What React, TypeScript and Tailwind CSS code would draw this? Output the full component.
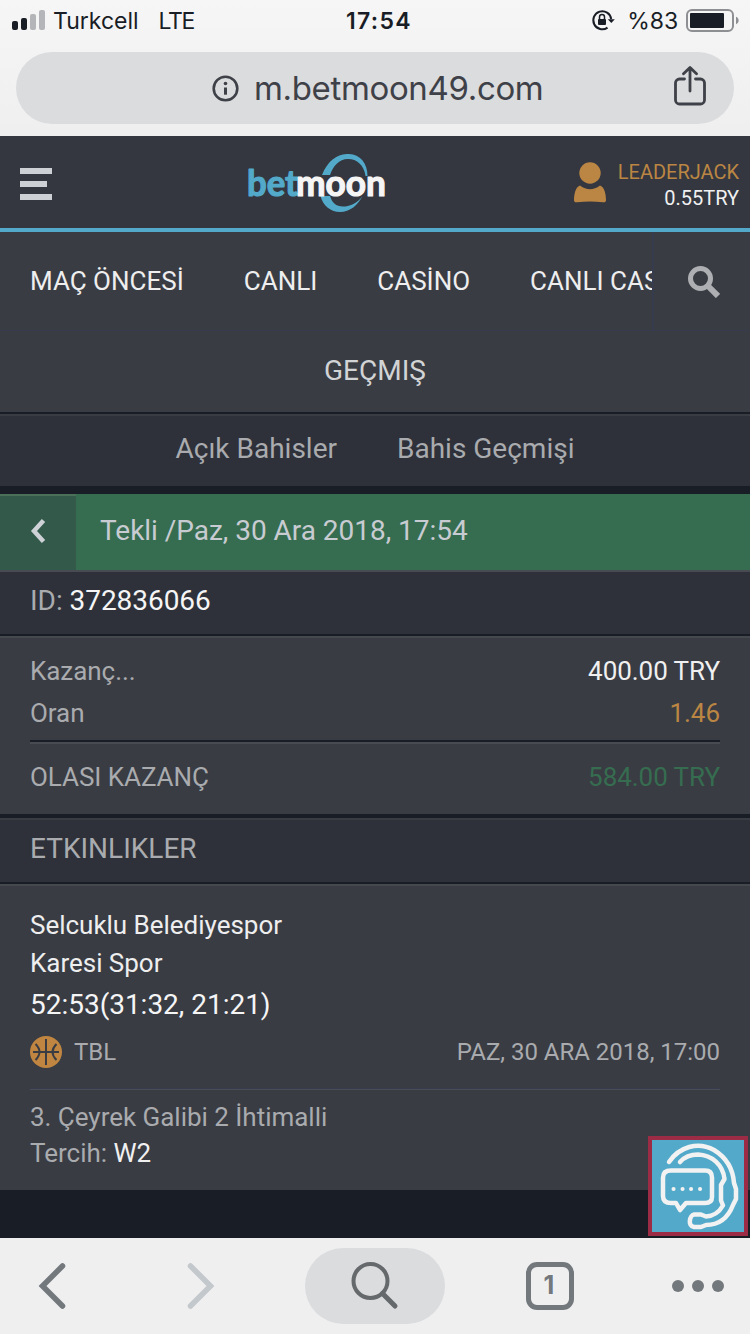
import type { ReactNode } from 'react'

const menu = ['MAÇ ÖNCESİ', 'CANLI', 'CASİNO', 'CANLI CASİNO']

function StatusBar() {
  return (
    <div className="flex h-10 shrink-0 items-center pl-3 pr-[11px] text-[23px] leading-10 text-[#191d25]">
      <svg className="mr-2 h-5 w-[33px]" viewBox="0 0 33 20">
        <rect x="0" y="11" width="6" height="9" rx="2" fill="#191d25" />
        <rect x="9" y="8" width="6" height="12" rx="2" fill="#191d25" />
        <rect x="18" y="4" width="6" height="16" rx="2" fill="#b3b5b8" />
        <rect x="27" y="0" width="6" height="20" rx="2" fill="#b3b5b8" />
      </svg>
      <div className="mt-[2px] flex w-[293px] gap-[20px]">
        <span>Turkcell</span>
        <span className="tracking-[-1.4px]">LTE</span>
      </div>
      <span className="mt-[2px] font-semibold tracking-[1.3px]">17:54</span>
      <div className="ml-auto flex items-center">
        <svg className="mr-3 h-6 w-6" viewBox="0 0 24 24" fill="none" stroke="#191d25" strokeWidth="2">
          <path d="M20.2 11A9 9 0 1 0 16.5 19.600" />
          <path d="M16.8 11.2h7L20.3 15z" fill="#191d25" stroke="none" />
          <rect x="7" y="11" width="8" height="6" rx="1" fill="#191d25" stroke="none" />
          <path d="M8.500 11.500V9a2.500 2.500 0 0 1 5 0v2.500" strokeWidth="1.500" />
        </svg>
        <span className="mt-[2px] mr-2 tracking-[-0.1px]">%83</span>
        <svg className="h-6 w-[53px]" viewBox="0 0 53 24">
          <rect x="1" y="2" width="46" height="21" rx="5" fill="none" stroke="#8d8f93" strokeWidth="2" />
          <rect x="4" y="5" width="34" height="15" rx="1" fill="#191d25" />
          <path d="M50 8.800c3.500 1.200 3.500 6.200 0 7.400z" fill="#8d8f93" />
        </svg>
      </div>
    </div>
  )
}

function AddressBar() {
  return (
    <div className="mx-4 mt-3 mb-3 flex h-[72px] shrink-0 items-center rounded-full bg-[#dbdcde] pl-[196px] pr-7 text-[#3f4148]">
      <svg className="mr-[15px] h-[27px] w-[27px]" viewBox="0 0 27 27" fill="none" stroke="currentColor">
        <circle cx="13.5" cy="13.5" r="11.8" strokeWidth="2.6" />
        <path d="M13.5 12.5v7.2" strokeWidth="3" />
        <circle cx="13.5" cy="8.5" r="1.8" fill="currentColor" stroke="none" />
      </svg>
      <span className="text-[33px] leading-[72px] tracking-[-0.35px]">m.betmoon49.com</span>
      <svg className="mb-1 ml-auto h-10 w-8" viewBox="0 0 32 40" fill="none" stroke="currentColor" strokeWidth="2.8" strokeLinecap="round" strokeLinejoin="round">
        <path d="M10.5 13H5.5a4 4 0 0 0-4 4v17a4 4 0 0 0 4 4h21a4 4 0 0 0 4-4V17a4 4 0 0 0-4-4h-5" />
        <path d="M16 25V2M9.5 7.8L16 1.5l6.5 6.3" />
      </svg>
    </div>
  )
}

function Logo() {
  return (
    <svg className="mt-1 h-[60px] w-[140px]" viewBox="0 0 140 60" strokeLinejoin="round">
      <path d="M75 21C81 6 91-.5 102 0c11 .5 18.500 9 18.500 22h-2C117 11 110 5 101 5c-9 0-15 7-18 16z" fill="#53a9c9" />
      <path d="M73.500 42C76 52 84 58 93 58c10 0 18-7 22.500-16C110 50 102 52.500 96 52.500c-7 0-11-4-13-10.500z" fill="#53a9c9" />
      <text x="0" y="41.5" textLength="51" lengthAdjust="spacingAndGlyphs" fontFamily="Lato" fontWeight="700" fontSize="37" fill="#53a9c9" stroke="#53a9c9" strokeWidth="1.2">bet</text>
      <text x="49" y="41.5" textLength="90" lengthAdjust="spacingAndGlyphs" fontFamily="Lato" fontWeight="700" fontSize="37" fill="#f5f5f6" stroke="#f5f5f6" strokeWidth="1.2">moon</text>
    </svg>
  )
}

function Header() {
  return (
    <div className="flex h-24 shrink-0 items-center border-b-4 border-[#53a9c9] bg-[#343740] pl-5 pr-[11px]">
      <div className="mt-1 flex w-[227px] flex-col gap-[7px]">
        <span className="h-[6px] w-8 bg-[#cdd1d6]" />
        <span className="h-[6px] w-[27px] bg-[#cdd1d6]" />
        <span className="h-[6px] w-8 bg-[#cdd1d6]" />
      </div>
      <Logo />
      <div className="ml-auto flex items-center gap-[12px]">
        <svg className="h-[41px] w-8" viewBox="0 0 32 41" fill="#bb8643">
          <circle cx="16" cy="11" r="10.700" />
          <path d="M6 23.500Q16 31 26 23.500C31 25 32 34 32 38c0 2-1 2.500-3 2.300Q16 38.800 3 40.300C1 40.500 0 40 0 38c0-4 1-13 6-14.500z" />
        </svg>
        <div className="mt-[5px] flex flex-col text-right text-xl leading-[26px] tracking-[-0.02px]">
          <span className="text-[#bb8643]">LEADERJACK</span>
          <span className="text-[#f0f0f1]">0.55TRY</span>
        </div>
      </div>
    </div>
  )
}

function Row({ label, cor, children }: { label: string; cor: string; children: ReactNode }) {
  return (
    <div className="flex h-[42px] items-center justify-between">
      <span>{label}</span>
      <span className={cor}>{children}</span>
    </div>
  )
}

function Basketball() {
  return (
    <svg className="h-8 w-8" viewBox="0 0 32 32" fill="none" stroke="#393c43" strokeWidth="2">
      <circle cx="16" cy="16" r="16" fill="#c08641" stroke="none" />
      <path d="M16 3v26M3 16h26M5.500 8Q13.500 16 5.500 24M26.500 8Q18.500 16 26.500 24" />
    </svg>
  )
}

function SupportButton() {
  return (
    <button className="absolute right-[2px] bottom-[2px] h-[100px] w-[100px] border-4 border-[#9c2c45] bg-[#53a9c9]">
      <svg className="h-[92px] w-[92px]" viewBox="0 0 92 92" fill="none" stroke="#f2f2f3" strokeWidth="4.500" strokeLinecap="round" strokeLinejoin="round">
        <path d="M17 22C27 7 46 1 62 10c13 8 19 19 20 33l2 6v10l-3 6C76 78 68 85 54 85l-5 2h-7c-7-1-4-12 0-12.500h7l5 2c8-.5 13-4 17-11l-2-5V45l3.500-6C71 25 60 15 46 14.500c-8 0-14 3-18 7.500" />
        <path d="M19 30.500h34q7 0 7 7V57q0 6-7 6H34l-6 7-4-7h-5q-8 0-8-7V37.500q0-7 8-7z" />
        <path d="M21.500 49h.1M30.500 49h.1M39 49h.1M48 49h.1" strokeWidth="4" />
      </svg>
    </button>
  )
}

function Toolbar() {
  return (
    <div className="flex h-24 shrink-0 items-center bg-[#efeff0] pl-[38px] pr-[26px] text-[#72787c]">
      <svg className="mr-[121px] h-12 w-7" viewBox="0 0 28 48" fill="none" stroke="currentColor" strokeWidth="5.500" strokeLinecap="round">
        <path d="M24.500 4L4.500 24l20 20" />
      </svg>
      <svg className="mr-[90px] h-12 w-7" viewBox="0 0 28 48" fill="none" stroke="#c3c8cc" strokeWidth="5.500" strokeLinecap="round">
        <path d="M3.500 4l20 20-20 20" />
      </svg>
      <div className="flex h-[76px] w-[140px] items-center justify-center rounded-full bg-[#dadcde]">
        <svg className="h-12 w-12" viewBox="0 0 48 48" fill="none" stroke="#66696c" strokeWidth="4" strokeLinecap="round">
          <circle cx="19.500" cy="19" r="17" />
          <path d="M31.500 31.500L44 44" strokeWidth="5" />
        </svg>
      </div>
      <div className="ml-[81px] flex h-12 w-12 items-center justify-center rounded-[11px] border-[5px] border-current pr-[2px] text-[25px] font-bold">1</div>
      <div className="ml-auto flex gap-2">
        <span className="h-3 w-3 rounded-full bg-current" />
        <span className="h-3 w-3 rounded-full bg-current" />
        <span className="h-3 w-3 rounded-full bg-current" />
      </div>
    </div>
  )
}

export default function App() {
  return (
    <div className="flex h-[1334px] w-[750px] flex-col overflow-hidden bg-gradient-to-b from-[#f6f6f6] to-[#efeff0] to-10% font-['Inter',sans-serif]">
      <StatusBar />
      <AddressBar />

      <div className="relative flex h-[1102px] shrink-0 flex-col bg-[#191d25] font-['Roboto',sans-serif] text-[#a9abae]">
        <Header />

        {/* Menu */}
        <div className="flex h-[99px] shrink-0 border-b border-[#363b4e] bg-[#393c43]">
          <div className="flex w-[652px] gap-[60px] overflow-hidden whitespace-nowrap pl-[30px] text-[26px] leading-[98px] text-[#eeeeef]">
            {menu.map((item) => (
              <span key={item}>{item}</span>
            ))}
          </div>
          <div className="flex flex-1 items-center border-l-2 border-[#363b4e] pl-[34px]">
            <svg className="mt-[2px] h-8 w-8" viewBox="0 0 32 32" fill="none" stroke="#adafb2" strokeWidth="5">
              <circle cx="12.500" cy="12.500" r="10" />
              <path d="M19.500 19.500L30 30" strokeWidth="6" />
            </svg>
          </div>
        </div>
        <div className="h-[81px] shrink-0 bg-[#393c43] text-center text-[28px] leading-[80px] text-[#d2d3d5]">GEÇMIŞ</div>

        {/* Abas */}
        <div className="mt-[2px] flex h-[72px] shrink-0 justify-center gap-[60px] border-t-2 border-[#393c43] bg-[#2e3139] text-[28px] leading-[66px]">
          <span>Açık Bahisler</span>
          <span>Bahis Geçmişi</span>
        </div>

        {/* Cupom */}
        <div className="mt-2 flex h-[76px] shrink-0 items-center bg-[#366d50] text-[28px] leading-[76px] text-[#c8ccd2]">
          <button className="flex h-full w-[76px] items-center justify-center border-t-2 border-[#4a7059] bg-[#33594a] pb-[5px]">
            <svg className="h-6 w-4" viewBox="0 0 16 24" fill="none" stroke="#ced2d7" strokeWidth="4.500">
              <path d="M13.500 1.500L4 12l9.500 10.500" />
            </svg>
          </button>
          <span className="ml-6 -mt-[2px] tracking-[-0.03px]">Tekli /Paz, 30 Ara 2018, 17:54</span>
        </div>
        <div className="h-16 shrink-0 border-t-2 border-[#484b52] bg-[#2e3139] pl-[30px] text-[28px] leading-[58px] tracking-[-0.05px]">
          ID: <span className="text-[#f5f5f6]">372836066</span>
        </div>

        <div className="mt-[2px] h-[178px] shrink-0 border-t-2 border-[#45484d] bg-[#393c43] px-[30px] pt-3 text-[26px] tracking-[-0.05px]">
          <Row label="Kazanç..." cor="text-[#f0f0f1]">400.00 TRY</Row>
          <Row label="Oran" cor="text-[#bb8643]">1.46</Row>
          <div className="mt-[6px] h-1 border-t-2 border-b-2 border-t-[#191d25] border-b-[#484b52]" />
          <div className="pt-3">
            <Row label="OLASI KAZANÇ" cor="text-[#366d50]">584.00 TRY</Row>
          </div>
        </div>

        {/* Eventos */}
        <div className="mt-1 h-16 shrink-0 border-t-2 border-[#393c43] bg-[#2e3139] pl-[30px] text-[28px] leading-[58px]">ETKINLIKLER</div>
        <div className="mt-[2px] h-[306px] shrink-0 border-t-2 border-[#45484d] bg-[#393c43] px-[30px] pt-5 text-[26px] tracking-[-0.02px]">
          <div className="leading-[38px] text-[#eeeeef]">
            <p>Selcuklu Belediyespor</p>
            <p>Karesi Spor</p>
          </div>
          <p className="text-[28px] leading-[46px] text-[#f5f5f6]">52:53(31:32, 21:21)</p>
          <div className="flex h-12 items-center text-2xl">
            <Basketball />
            <span className="ml-3">TBL</span>
            <span className="ml-auto">PAZ, 30 ARA 2018, 17:00</span>
          </div>
          <div className="mt-3 h-[2px] border-t border-[#363b4e] bg-[#4a4d54]" />
          <div className="pt-[9px] leading-9">
            <p>3. Çeyrek Galibi 2 İhtimalli</p>
            <p>Tercih: <span className="text-[#f0f0f1]">W2</span></p>
          </div>
        </div>

        <SupportButton />
      </div>

      <Toolbar />
    </div>
  )
}
